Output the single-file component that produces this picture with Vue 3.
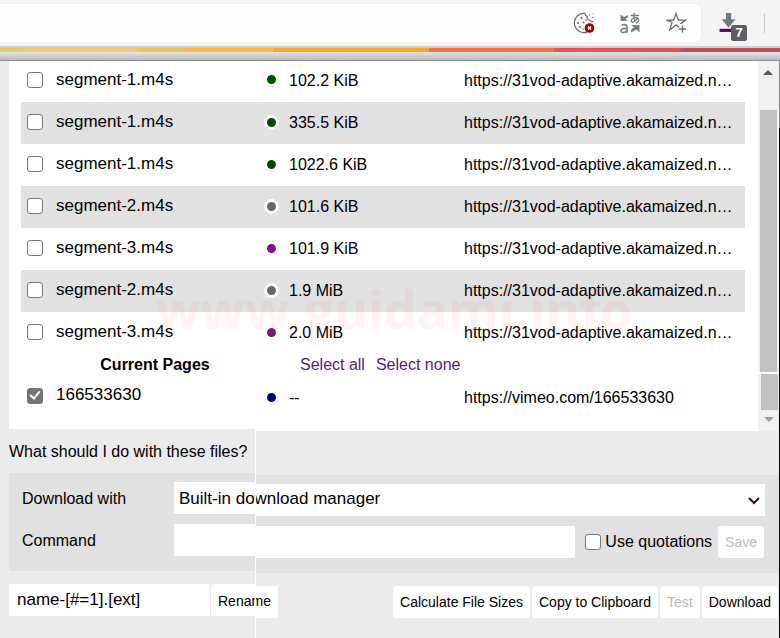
<script setup>
import { ref } from 'vue'

const url = 'https://31vod-adaptive.akamaized.n…'
const files = ref([
  { name: 'segment-1.m4s', size: '102.2 KiB', tone: 'green', checked: false },
  { name: 'segment-1.m4s', size: '335.5 KiB', tone: 'green', checked: false },
  { name: 'segment-1.m4s', size: '1022.6 KiB', tone: 'green', checked: false },
  { name: 'segment-2.m4s', size: '101.6 KiB', tone: 'gray', checked: false },
  { name: 'segment-3.m4s', size: '101.9 KiB', tone: 'purple', checked: false },
  { name: 'segment-2.m4s', size: '1.9 MiB', tone: 'gray', checked: false },
  { name: 'segment-3.m4s', size: '2.0 MiB', tone: 'purple', checked: false }
])
const pageChecked = ref(true)
const manager = ref('builtin')
const command = ref('')
const quotations = ref(false)
const pattern = ref('name-[#=1].[ext]')

function selectPages(value) {
  pageChecked.value = value
}
</script>

<template>
  <div class="window">
    <header class="toolbar">
      <div class="address">
        <svg class="icon" viewBox="0 0 22 22" aria-hidden="true">
          <path d="M12 1.200A9.700 9.700 0 1 0 14 20.100M12 1.200c.2 1.600 1 2.700 2.200 3.200-.4 2 .8 3.600 2.700 3.900 1 1.600 2.400 1.700 3.400 1" fill="none" stroke="#6c7073" stroke-width="1.200" />
          <g fill="#6c7073"><circle cx="8.500" cy="6" r="1.100" /><circle cx="5" cy="11" r="1" /><circle cx="10.500" cy="10.500" r="1.100" /><circle cx="7" cy="15" r="1.100" /><circle cx="10.500" cy="17" r=".8" /><circle cx="13" cy="8" r=".8" /><circle cx="16.500" cy="3" r=".8" /><circle cx="20" cy="2" r=".6" /><circle cx="19.500" cy="5.500" r=".8" /></g>
          <circle cx="16.500" cy="16" r="4.800" fill="#a80000" />
          <path d="M15 14.500l3 3m0-3l-3 3" stroke="#fff" stroke-width="1.500" />
        </svg>
        <svg class="icon" viewBox="0 0 22 22" aria-hidden="true">
          <g fill="none" stroke="#7b7f82" stroke-width="1.300">
            <path d="M11.500 3.500h8.500M15 .8c-.2 3.700 0 6.500.8 9M18.500 5c-1 3.600-3.500 5.500-5.300 5.100-1.900-.6-.8-4 2.800-4.400 4.200-.5 5.100 4.400.9 5.100" />
            <path d="M2.500 13.300c1.200-1 5.500-1.300 5.500 1.500v6M8 16.300c-3 0-6 .2-6 2.400 0 2.700 5 2.400 6-.4" stroke-width="1.600" />
          </g>
          <path d="M1.500 2.500v6.500h7L6.500 7l2.500-2V3L5 5zM20.500 20.500V13h-8l2.500 2.200-3 2.800v2.500l5.500-3z" fill="#7b7f82" />
        </svg>
        <svg class="icon" viewBox="0 0 22 22" aria-hidden="true">
          <path d="M14 15.200l-3-2.300-6.200 5 2.300-7.800L1.400 8.100h7.200L11 1.600l2.400 6.500h7.200l-5.300 3.800" fill="none" stroke="#6c7073" stroke-width="1.300" />
          <path d="M17.500 13.500v7M14 17h7" stroke="#6c7073" stroke-width="1.400" />
        </svg>
      </div>
      <div class="extension">
        <svg class="arrow" viewBox="0 0 18 19" aria-hidden="true">
          <path d="M7 0h5v6h4l-6.500 8L3 6h4z" fill="#75787b" />
          <path d="M1 15h16v3H1z" fill="#4c0f52" />
        </svg>
        <span class="badge">7</span>
      </div>
      <span class="divider"></span>
    </header>
    <div class="stripe"></div>
    <div class="shadow"></div>

    <main class="popup">
      <div class="list">
        <div class="scroll-content">
          <table>
            <colgroup><col class="c-check"><col class="c-name"><col class="c-dot"><col class="c-size"><col></colgroup>
            <tbody>
              <tr v-for="(f, i) in files" :key="i" class="file">
                <td><input :id="'f' + i" v-model="f.checked" class="box" type="checkbox"></td>
                <td><label class="name" :for="'f' + i">{{ f.name }}</label></td>
                <td><span class="dot" :class="f.tone"></span></td>
                <td>{{ f.size }}</td>
                <td>{{ url }}</td>
              </tr>
              <tr class="group">
                <th colspan="3" scope="colgroup"><span class="title">Current Pages</span></th>
                <td colspan="2">
                  <div class="links">
                    <a href="#" @click.prevent="selectPages(true)">Select all</a>
                    <a href="#" @click.prevent="selectPages(false)">Select none</a>
                  </div>
                </td>
              </tr>
              <tr class="file page">
                <td><input id="page" v-model="pageChecked" class="box" type="checkbox"></td>
                <td><label class="name" for="page">166533630</label></td>
                <td><span class="dot navy"></span></td>
                <td>--</td>
                <td>https://vimeo.com/166533630</td>
              </tr>
            </tbody>
          </table>
        </div>
        <div class="scrollbar" aria-hidden="true">
          <svg viewBox="0 0 20 49" class="cap-top"><path d="M5 14l5-5 5 5z" fill="#55585c" /></svg>
          <div class="thumb"></div>
          <div class="gap"></div>
          <div class="thumb short"></div>
          <svg viewBox="0 0 20 21" class="cap-end"><path d="M6 7h10l-5 5z" fill="#9a9d9f" /></svg>
        </div>
        <div class="watermark" aria-hidden="true">www.guidami.info</div>
      </div>

      <div class="lower">
        <p class="question">What should I do with these files?</p>
        <section class="panel step">
          <label for="manager">Download with</label>
          <div class="picker">
            <select id="manager" v-model="manager" class="field step">
              <option value="builtin">Built-in download manager</option>
            </select>
            <svg class="chevron" viewBox="0 0 12 8" aria-hidden="true"><path d="M1 1l5 5 5-5" fill="none" stroke="#2c0a30" stroke-width="2" /></svg>
          </div>
          <label for="command">Command</label>
          <div class="command">
            <input id="command" v-model="command" class="field step" type="text">
            <label class="quote"><input v-model="quotations" class="box" type="checkbox">Use quotations</label>
            <button type="button" disabled>Save</button>
          </div>
        </section>
        <div class="actions">
          <input v-model="pattern" class="pattern" type="text" aria-label="Name pattern">
          <button type="button" class="rename step">Rename</button>
          <div class="right">
            <button type="button">Calculate File Sizes</button>
            <button type="button">Copy to Clipboard</button>
            <button type="button" disabled>Test</button>
            <button type="button">Download</button>
          </div>
        </div>
        <span class="seam"></span>
      </div>
    </main>
  </div>
</template>

<style>
body { background: #ebebeb; }
</style>

<style scoped>
* { box-sizing: border-box; }
.window { font: 16px/20px "Liberation Sans", Arial, sans-serif; color: #000; overflow: hidden; }
.toolbar { display: flex; align-items: center; height: 46px; background: #f4f4f4; }
.address { flex: 1; display: flex; justify-content: flex-end; gap: 24px; height: 38px; padding: 8px 14px 0 0; background: #fefefe; border-radius: 0 6px 6px 0; box-shadow: 0 0 2px #e4e4e4; }
.icon { width: 22px; height: 22px; }
.extension { position: relative; width: 46px; height: 30px; margin-left: 17px; }
.arrow { display: block; width: 20px; height: 20px; margin-top: 5px; }
.badge { position: absolute; left: 13px; top: 17px; width: 16px; height: 16px; border-radius: 2px; background: #5c6063; color: #fff; font: bold 13px/16px "Liberation Sans", Arial, sans-serif; text-align: center; }
.divider { width: 1px; height: 20px; margin-right: 15px; background: #ccc; }
.stripe { height: 6px; border-top: 2px solid #cfcfd1; background: linear-gradient(90deg, #ecc75c 0 2%, #f7c86f 4% 17%, #efc455 18% 23%, #fdb842 24% 35%, #ffa622 35% 55%, #ff6f3c 55% 71%, #ee4f50 71% 80%, #e64e52 87%, #c6475a 88%); }
.shadow { height: 9px; background: linear-gradient(#e4e6e6, #b8baba); border-bottom: 1px solid #8e9090; }
.popup { padding-right: 1px; background: linear-gradient(#8a8a8e 67px, #000 67px); }
.list { position: relative; display: flex; padding-left: 9px; background: #ebebeb; }
.scroll-content { flex: 1; min-width: 0; padding: 0 13px 13px 12px; background: #fff; clip-path: polygon(0 0, 100% 0, 100% 100%, 246px 100%, 246px calc(100% - 2px), 0 calc(100% - 2px)); }
table { width: 100%; table-layout: fixed; border-collapse: collapse; }
.c-check { width: 35px; }
.c-name { width: 207px; }
.c-dot { width: 26px; }
.c-size { width: 175px; }
td, th { padding: 0; vertical-align: middle; white-space: nowrap; }
.file { height: 42px; }
.file:first-child { height: 41px; }
.file:first-child td { padding-bottom: 2px; }
.file:nth-child(even) { background: #e1e1e1; }
.file.page { background: #fff; }
.group { height: 22px; }
.links { display: flex; gap: 11px; padding-left: 11px; }
.links a { color: #551a8b; text-decoration: none; }
.title { display: block; text-align: center; }
.name { display: block; padding-bottom: 2px; font-size: 17px; }
.page td { padding-top: 2px; }
.page .name { padding-bottom: 6px; }
.box { appearance: none; display: block; width: 16px; height: 16px; margin: 0 0 2px 6px; border: 1px solid #767676; border-radius: 3px; background: #fff; }
.box:checked { position: relative; margin-bottom: 4px; border-color: #757575; background: #757575; }
.box:checked::after { content: ""; position: absolute; left: 4px; top: 0; width: 4px; height: 8px; border: solid #fff; border-width: 0 2px 2px 0; transform: rotate(40deg); }
.dot { display: block; width: 15px; height: 15px; margin: 0 0 2px 1px; border: 3px solid #fff; border-radius: 50%; }
.green { background-color: #004d00; }
.gray { background-color: #66696c; }
.purple { background-color: #85108a; }
.navy { background-color: #000080; }
.scrollbar { display: flex; flex-direction: column; width: 21px; background: #f1f1f1; }
.cap-top { width: 20px; height: 49px; }
.cap-end { width: 20px; height: 21px; }
.thumb { flex: 1; margin: 0 2px; background: #c1c1c1; }
.short { flex: none; height: 36px; margin: 0 1px 0 3px; }
.gap { height: 2px; background: #fff; }
.watermark { position: absolute; left: 156px; top: 218px; font: 700 52px/60px "Open Sans", sans-serif; color: rgba(255, 60, 60, 0.06); pointer-events: none; white-space: nowrap; }
.lower { position: relative; padding: 11px 0 20px 9px; background: #ebebeb; }
.question { margin: 0 0 11px; }
/* Everything right of the seam sits two pixels lower. */
.step { clip-path: polygon(0 0, var(--seam) 0, var(--seam) 2px, 100% 2px, 100% 100%, var(--seam) 100%, var(--seam) calc(100% - 2px), 0 calc(100% - 2px)); }
.panel { --seam: 246px; display: grid; grid-template-columns: 152px 1fr; row-gap: 8px; align-items: center; padding: 9px 14px 15px 13px; background: #e1e1e1; }
.field { --seam: 81px; display: block; width: 100%; height: 34px; padding: 0 5px; border: 0; border-radius: 0; background: #fff; color: #000; font: inherit; font-size: 17px; appearance: none; }
.picker { position: relative; }
.chevron { position: absolute; right: 5px; top: 15px; width: 12px; height: 8px; }
.command { display: flex; align-items: flex-end; padding-right: 1px; }
.command .field { flex: 1; min-width: 0; }
.quote { display: flex; align-items: center; gap: 4px; height: 32px; padding: 0 6px 0 4px; white-space: nowrap; }
.quote .box { margin-bottom: 0; }
button { height: 32px; padding: 0 7px; border: 0; border-radius: 3px; background: #fff; color: #000; font: 14px/20px "Liberation Sans", Arial, sans-serif; white-space: nowrap; }
button:disabled { color: #b9bcb9; }
.actions { display: flex; align-items: flex-start; margin-top: 11px; }
.pattern { width: 201px; height: 32px; padding: 0 8px; border: 0; background: #fff; color: #000; font: inherit; font-size: 17px; }
.rename { --seam: 45px; height: 34px; margin-left: 1px; }
.right { display: flex; gap: 2px; align-self: flex-end; margin: 0 1px 0 auto; }
.seam { position: absolute; left: 255px; top: 0; bottom: 0; width: 1px; background: #fff; }
</style>
